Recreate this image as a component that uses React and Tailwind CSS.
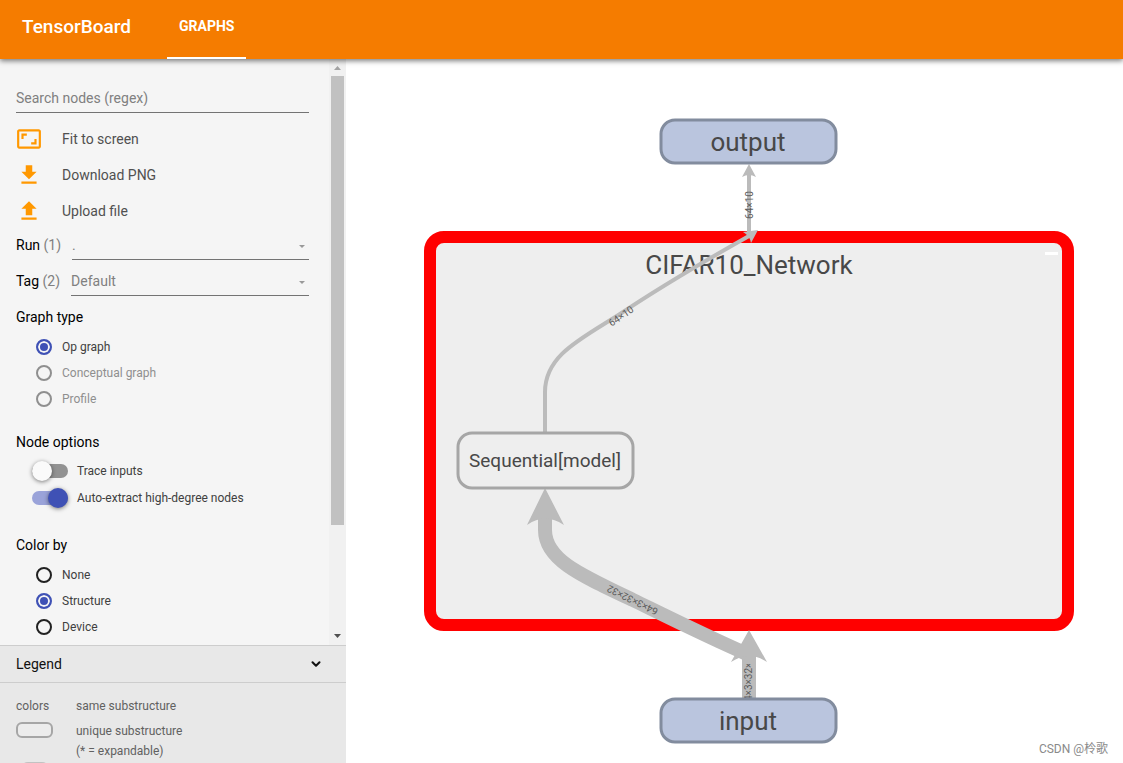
import { useState } from "react";
import { ChevronDown } from "lucide-react";
import { MdAspectRatio } from "react-icons/md";

const GRAPH_TYPES = [
  { value: "op", label: "Op graph" },
  { value: "conceptual", label: "Conceptual graph", disabled: true },
  { value: "profile", label: "Profile", disabled: true },
];

const COLOR_BY = [
  { value: "none", label: "None" },
  { value: "structure", label: "Structure" },
  { value: "device", label: "Device" },
];

function DownloadIcon() {
  return (
    <svg viewBox="0 0 24 24" className="size-[26px]" fill="currentColor">
      <path d="M19 9h-4V3H9v6H5l7 7 7-7zM5 18v2h14v-2H5z" />
    </svg>
  );
}

function UploadIcon() {
  return (
    <svg viewBox="0 0 24 24" className="size-[26px]" fill="currentColor">
      <path d="M9 16h6v-6h4l-7-7-7 7h4zm-4 2h14v2H5z" />
    </svg>
  );
}

function Header() {
  return (
    <header className="relative z-10 flex h-[59px] shrink-0 bg-[#f57c00] text-white shadow-[0_2px_5px_rgba(0,0,0,0.5)]">
      <h1 className="w-[167px] pl-[22px] text-[19px] leading-[54px] font-medium">
        TensorBoard
      </h1>
      <nav className="flex">
        <a
          href="#graphs"
          className="border-b-2 border-white px-3 text-sm leading-[53px] font-bold"
        >
          GRAPHS
        </a>
      </nav>
    </header>
  );
}

function ActionButton({ icon, children }) {
  return (
    <button className="flex h-9 w-full items-center text-left text-sm text-[#505050]">
      <span className="flex w-[46px] items-center text-[#ff9800]">{icon}</span>
      {children}
    </button>
  );
}

function SelectRow({ id, label, count, options }) {
  return (
    <div className="flex h-9 items-start text-sm">
      <label htmlFor={id} className="mr-[11px] leading-8 text-black">
        {label} <span className="text-[#808080]">({count})</span>
      </label>
      <div className="relative flex-1">
        <select
          id={id}
          className="h-[31px] w-full appearance-none border-b border-[#737373] bg-transparent pt-0.5 text-[#808080] outline-none"
        >
          {options.map((option) => (
            <option key={option}>{option}</option>
          ))}
        </select>
        <svg
          viewBox="0 0 6 3"
          className="pointer-events-none absolute top-4 right-1 h-[3px] w-1.5 fill-[#999]"
        >
          <path d="M0 0h6L3 3z" />
        </svg>
      </div>
    </div>
  );
}

function RadioGroup({ name, title, options, value, onChange }) {
  return (
    <fieldset>
      <legend className="text-sm leading-[30px] text-black">{title}</legend>
      <div className="mt-0.5 ml-5">
        {options.map((option) => (
          <label
            key={option.value}
            className={`flex h-[26px] items-center gap-2.5 text-xs ${
              option.disabled ? "text-[#8f8f8f]" : "text-[#404040]"
            }`}
          >
            <input
              type="radio"
              name={name}
              value={option.value}
              disabled={option.disabled}
              checked={value === option.value}
              onChange={() => onChange(option.value)}
              className="size-4 appearance-none rounded-full border-2 border-[#212121] checked:border-[#3f51b5] checked:bg-[#3f51b5] checked:shadow-[inset_0_0_0_2px_#f5f5f5] disabled:border-[#8f8f8f]"
            />
            {option.label}
          </label>
        ))}
      </div>
    </fieldset>
  );
}

function Toggle({ label, checked, onChange }) {
  return (
    <label className="ml-4 flex h-[27px] items-center text-xs text-[#404040]">
      <input
        type="checkbox"
        checked={checked}
        onChange={(e) => onChange(e.target.checked)}
        className="relative mr-[9px] h-3.5 w-9 appearance-none rounded-full bg-[#929292] before:absolute before:-top-[3px] before:left-0 before:size-5 before:rounded-full before:bg-[#fafafa] before:shadow-[0_1px_4px_rgba(0,0,0,0.5)] checked:bg-[#9aa3d9] checked:before:left-4 checked:before:bg-[#3f51b5]"
      />
      {label}
    </label>
  );
}

function ScrollBar() {
  return (
    <div className="flex w-[17px] shrink-0 flex-col items-center bg-[#f1f1f1]">
      <svg viewBox="0 0 17 17" className="size-[17px]" fill="#a3a3a3">
        <path d="M5 11h7L8.500 7z" />
      </svg>
      <div className="w-[13px] flex-[449] bg-[#c1c1c1]" />
      <div className="flex-[103]" />
      <svg viewBox="0 0 17 17" className="size-[17px]" fill="#505050">
        <path d="M5 6h7l-3.500 4z" />
      </svg>
    </div>
  );
}

function Legend() {
  return (
    <section className="h-[118px] shrink-0 overflow-hidden bg-[#e8e8e8]">
      <button className="flex h-[38px] w-full items-center justify-between border-y border-[#cdcdcd] pr-[23px] pl-4 text-sm text-[#111]">
        Legend
        <ChevronDown size={14} strokeWidth={3.5} />
      </button>
      <div className="grid grid-cols-[60px_1fr] gap-y-[5px] pt-[13px] pl-4 text-xs leading-5 text-[#616161]">
        <span>colors</span>
        <span>same substructure</span>
        <span className="mt-px h-4 w-[37px] rounded-md border-2 border-[#a6a6a6] bg-[#ececec]" />
        <span>
          unique substructure
          <br />
          (* = expandable)
        </span>
        <span className="-mt-1 ml-1 h-4 w-[30px] rounded-full border-2 border-[#c2c2c2]" />
      </div>
    </section>
  );
}

function Sidebar() {
  const [graphType, setGraphType] = useState("op");
  const [colorBy, setColorBy] = useState("structure");
  const [traceInputs, setTraceInputs] = useState(false);
  const [autoExtract, setAutoExtract] = useState(true);

  return (
    <aside className="flex w-[346px] shrink-0 flex-col bg-[#f5f5f5]">
      <div className="flex min-h-0 flex-1">
        <div className="min-w-0 flex-1 overflow-hidden pt-6 pr-5 pl-4">
          <input
            type="text"
            aria-label="Search nodes"
            placeholder="Search nodes (regex)"
            className="h-[30px] w-full border-b border-[#737373] text-sm outline-none placeholder:text-[#808080]"
          />
          <div className="mt-2">
            <ActionButton icon={<MdAspectRatio size={26} />}>
              Fit to screen
            </ActionButton>
            <ActionButton icon={<DownloadIcon />}>Download PNG</ActionButton>
            <ActionButton icon={<UploadIcon />}>Upload file</ActionButton>
          </div>
          <SelectRow id="run" label="Run" count={1} options={["."]} />
          <SelectRow
            id="tag"
            label="Tag"
            count={2}
            options={["Default", "Keras"]}
          />
          <div className="flex flex-col gap-4 pt-px">
            <RadioGroup
              name="graph-type"
              title="Graph type"
              options={GRAPH_TYPES}
              value={graphType}
              onChange={setGraphType}
            />
            <fieldset className="pb-[3px]">
              <legend className="text-sm leading-[29px] text-black">
                Node options
              </legend>
              <Toggle
                label="Trace inputs"
                checked={traceInputs}
                onChange={setTraceInputs}
              />
              <Toggle
                label="Auto-extract high-degree nodes"
                checked={autoExtract}
                onChange={setAutoExtract}
              />
            </fieldset>
            <RadioGroup
              name="color-by"
              title="Color by"
              options={COLOR_BY}
              value={colorBy}
              onChange={setColorBy}
            />
          </div>
        </div>
        <ScrollBar />
      </div>
      <Legend />
    </aside>
  );
}

function OpNode({ x, y, label }) {
  return (
    <g>
      <rect
        x={x}
        y={y}
        width="175"
        height="43"
        rx="14"
        fill="#bac5de"
        stroke="#828c9e"
        strokeWidth="3"
      />
      <text x={x + 87} y={y + 31} fontSize="26" textAnchor="middle">
        {label}
      </text>
    </g>
  );
}

function Graph() {
  return (
    <svg
      viewBox="0 0 777 704"
      className="h-full w-full"
      fill="#484848"
      fontFamily="Roboto, sans-serif"
    >
      <defs>
        <clipPath id="input-label">
          <rect x="390" y="605" width="26" height="34" />
        </clipPath>
      </defs>

      {/* expanded network node */}
      <rect
        x="84"
        y="178"
        width="638"
        height="388"
        rx="14"
        fill="#eee"
        stroke="#ff0000"
        strokeWidth="12"
      />
      <text x="403" y="215" fontSize="26" textAnchor="middle">
        CIFAR10_Network
      </text>
      <rect x="699" y="193" width="13" height="3" fill="#fff" />

      {/* edges */}
      <g fill="none" stroke="#bbb">
        <path d="M403 173V114" strokeWidth="4" />
        <path
          d="M199 373V333C199 296 235 280 274 255C310 231 355 204 403 177"
          strokeWidth="4"
        />
        <path d="M403 639V590" strokeWidth="14" />
        <path
          d="M199 458V471C199 500 232 515 287 541C330 562 360 577 401 595"
          strokeWidth="14"
        />
      </g>
      <g fill="#bbb">
        <path d="M403 105l7 13q-7-4-14 0z" />
        <path d="M412 171l-7 13q-1-7-8-11z" />
        <path d="M403 571l18 32q-18-12-36 0z" />
        <path d="M199 429l19 37q-19-13-37 0z" />
      </g>

      {/* tensor shapes */}
      <g fontSize="10" textAnchor="middle" fill="#5c5c5c">
        <text transform="translate(407 146) rotate(-90)">64×10</text>
        <text transform="translate(277 260) rotate(-34)">64×10</text>
        <text transform="translate(288 538) rotate(206)">64×3×32×32</text>
        <g clipPath="url(#input-label)">
          <text transform="translate(406 620) rotate(-90)">64×3×32×32</text>
        </g>
      </g>

      <rect
        x="112"
        y="374"
        width="175"
        height="55"
        rx="14"
        fill="#eee"
        stroke="#a6a6a6"
        strokeWidth="3"
      />
      <text x="199" y="408" fontSize="19" textAnchor="middle">
        Sequential[model]
      </text>
      <OpNode x={315} y={61} label="output" />
      <OpNode x={315} y={640} label="input" />
    </svg>
  );
}

export default function App() {
  return (
    <div className="flex h-screen flex-col bg-white font-['Roboto','Noto_Sans_CJK_SC',sans-serif]">
      <Header />
      <div className="flex min-h-0 flex-1">
        <Sidebar />
        <main className="relative min-w-0 flex-1">
          <Graph />
          <span className="absolute right-[15px] bottom-1.5 text-xs text-[#8a8a8a]">
            CSDN @柃歌
          </span>
        </main>
      </div>
    </div>
  );
}
